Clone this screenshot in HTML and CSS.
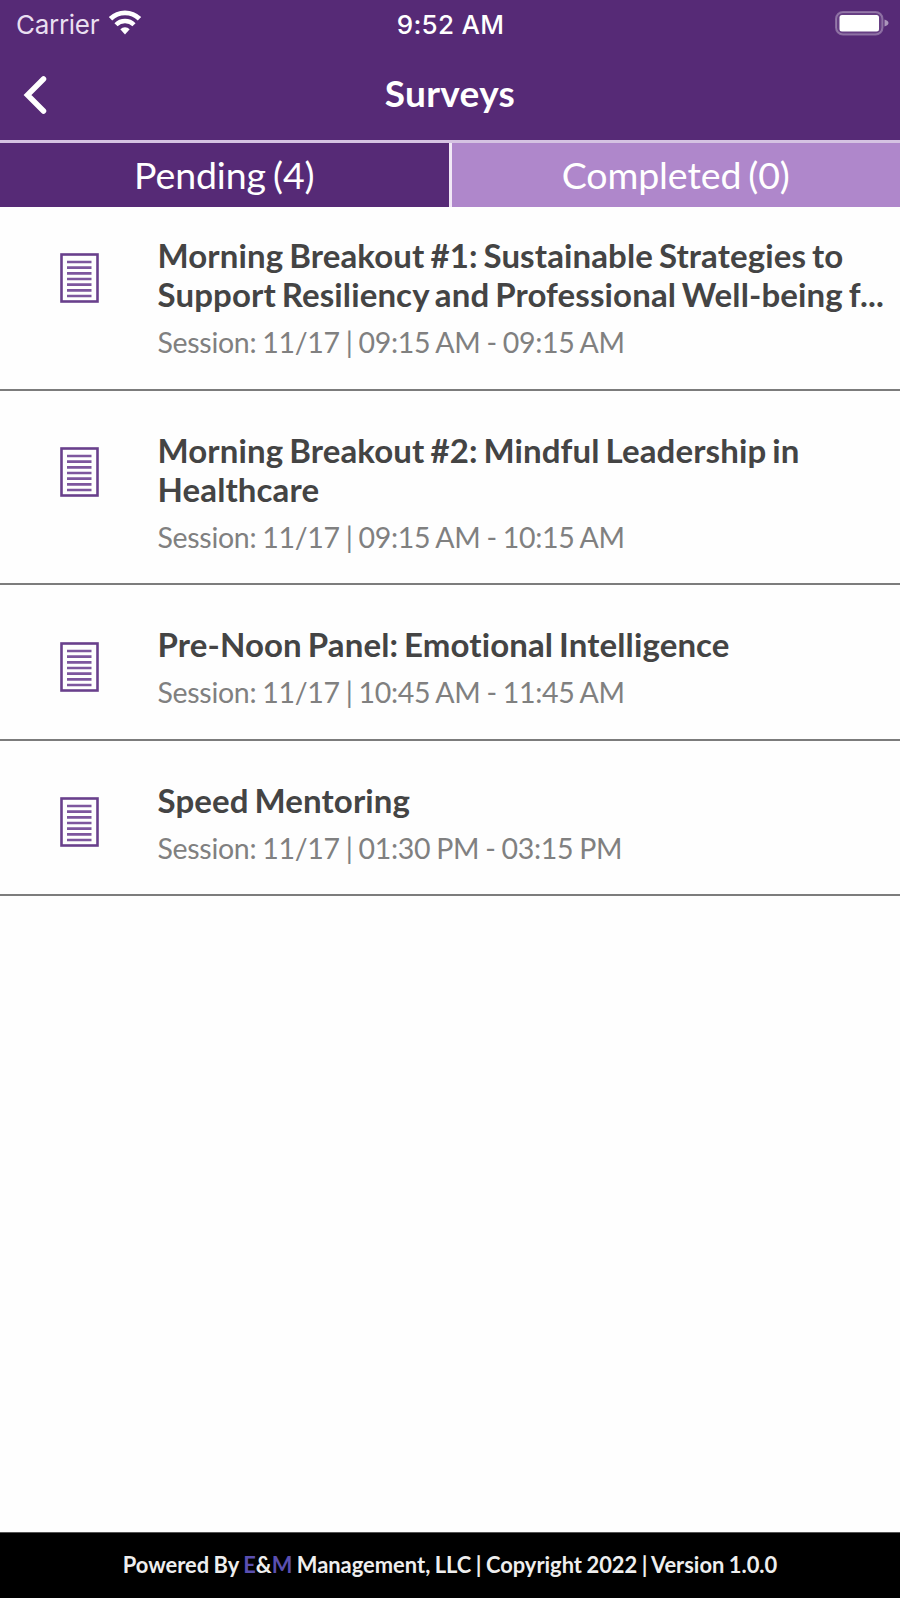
FILE: index.html
```html
<!DOCTYPE html>
<html lang="en">
<head>
  <meta charset="UTF-8" />
  <meta name="viewport" content="width=device-width, initial-scale=1" />
  <title>Surveys</title>
  <link rel="stylesheet" href="styles.css">
</head>
<body>

  <!-- icon shared by all survey rows -->
  <svg width="0" height="0" class="sprite" aria-hidden="true">
    <symbol id="sheet" viewBox="0 0 40 51">
      <rect x="1.5" y="1.5" width="36" height="47" fill="none" stroke="#69408c" stroke-width="2.6" />
      <path d="M7 9h24.5M7 14.7h24.5M7 20.3h24.5M7 26h24.5M7 31.7h24.5M7 37.3h24.5M7 43h24.5" stroke="#7d569e" stroke-width="2.7" />
    </symbol>
  </svg>

  <header>
    <div class="status">
      <div class="carrier">
        <span>Carrier</span>
        <svg width="34" height="26" viewBox="0 0 34 26" aria-hidden="true">
          <path d="M2.5 8.8a20.5 20.5 0 0 1 29 0" fill="none" stroke="#fff" stroke-width="4.8" />
          <path d="M8 14.8a12.7 12.7 0 0 1 18 0" fill="none" stroke="#fff" stroke-width="4.4" />
          <path d="M12.3 19.2a6.8 6.8 0 0 1 9.4 0L17 24.5z" fill="#fff" />
        </svg>
      </div>
      <span class="time">9:52 AM</span>
      <svg class="battery" width="56" height="26" viewBox="0 0 56 26" aria-hidden="true">
        <rect x="2" y="2" width="46.5" height="22.5" rx="7" fill="#fff" fill-opacity=".1" stroke="#fff" stroke-opacity=".3" stroke-width="2" />
        <rect x="5.5" y="5" width="39.5" height="16.5" rx="2.5" fill="#fff" />
        <path d="M50.500 9.5q4 1.3 4 3.5t-4 3.5z" fill="#fff" fill-opacity=".5" />
      </svg>
    </div>
    <div class="navbar">
      <svg class="back" width="24" height="40" viewBox="0 0 24 40" role="img" aria-label="Back">
        <path d="M20.5 5L4.5 21l16 16" fill="none" stroke="#fff" stroke-width="5.5" stroke-linecap="round" />
      </svg>
      <h1>Surveys</h1>
    </div>
  </header>

  <nav class="tabs">
    <div class="tab active">Pending (4)</div>
    <div class="tab">Completed (0)</div>
  </nav>

  <main class="surveys">
    <div class="survey">
      <svg class="icon"><use href="#sheet" /></svg>
      <div class="info">
        <h2>Morning Breakout #1: Sustainable Strategies to<br />Support Resiliency and Professional Well-being f...</h2>
        <p>Session: 11/17 | 09:15 AM - 09:15 AM</p>
      </div>
    </div>
    <div class="survey">
      <svg class="icon"><use href="#sheet" /></svg>
      <div class="info">
        <h2>Morning Breakout #2: Mindful Leadership in<br />Healthcare</h2>
        <p>Session: 11/17 | 09:15 AM - 10:15 AM</p>
      </div>
    </div>
    <div class="survey">
      <svg class="icon"><use href="#sheet" /></svg>
      <div class="info">
        <h2>Pre-Noon Panel: Emotional Intelligence</h2>
        <p>Session: 11/17 | 10:45 AM - 11:45 AM</p>
      </div>
    </div>
    <div class="survey">
      <svg class="icon"><use href="#sheet" /></svg>
      <div class="info">
        <h2>Speed Mentoring</h2>
        <p>Session: 11/17 | 01:30 PM - 03:15 PM</p>
      </div>
    </div>
  </main>

  <footer>Powered By <span class="brand">E</span>&amp;<span class="brand">M</span> Management, LLC | Copyright 2022 | Version 1.0.0</footer>

</body>
</html>
```

FILE: styles.css
```css
* {
  box-sizing: border-box;
}

body {
  margin: 0;
  height: 100vh;
  display: flex;
  flex-direction: column;
  background: #fefefe;
  font-family: Lato, sans-serif;
  font-variant-ligatures: none;
  color: #444;
  overflow: hidden;
}

h1, h2, p {
  margin: 0;
}

.sprite {
  display: none;
}

header {
  height: 140px;
  background: #562a76;
  color: #fff;
}

/* Status bar */
.status {
  height: 48px;
  padding: 0 10px 0 16px;
  display: grid;
  grid-template-columns: 1fr auto 1fr;
  align-items: center;
  font-family: Inter, sans-serif;
  font-size: 26px;
}

.carrier {
  display: flex;
  align-items: center;
  gap: 9px;
  color: #e9dff0;
  letter-spacing: -0.3px;
}

.carrier svg {
  margin-bottom: 3px;
}

.time {
  font-weight: 500;
  letter-spacing: 0.3px;
  margin-right: 5px;
}

.battery {
  justify-self: end;
  margin-bottom: 3px;
}

/* Title bar */
.navbar {
  height: 92px;
  padding: 0 23px;
  display: grid;
  grid-template-columns: 1fr auto 1fr;
  align-items: center;
}

.navbar h1 {
  font-size: 37px;
  line-height: 90px;
  letter-spacing: 0.3px;
  margin-bottom: 2px;
}

.tabs {
  display: flex;
  gap: 3px;
  height: 67px;
  border-top: 3px solid #d5c2e2;
  background: #f1e8f6;
}

.tab {
  flex: 1;
  background: #af87cb;
  color: #fff;
  font-size: 37.5px;
  line-height: 64px;
  letter-spacing: -0.1px;
  word-spacing: -2.5px;
  text-align: center;
}

.tab.active {
  background: #562a76;
}

/* Survey list */
.surveys {
  flex: 1;
}

.survey {
  display: flex;
  padding: 40px 0 28.5px 60px;
  border-bottom: 2px solid #7c7c7c;
}

.survey:first-child {
  padding-top: 29px;
}

.icon {
  flex: none;
  width: 40px;
  height: 51px;
  margin: 16.5px 57.5px 0 0;
}

.info h2 {
  font-size: 33px;
  line-height: 39px;
  letter-spacing: 0.12px;
  word-spacing: -2.2px;
  white-space: nowrap;
}

.info p {
  margin-top: 11px;
  color: #808080;
  font-size: 28.5px;
  line-height: 35px;
  letter-spacing: -0.3px;
  word-spacing: -1px;
}

footer {
  height: 66px;
  background: #000;
  border-top: 1px solid #555;
  color: #eee;
  font-size: 21.9px;
  font-weight: 700;
  line-height: 64px;
  word-spacing: -0.9px;
  text-align: center;
}

.brand {
  color: #5a4fb0;
}
```
